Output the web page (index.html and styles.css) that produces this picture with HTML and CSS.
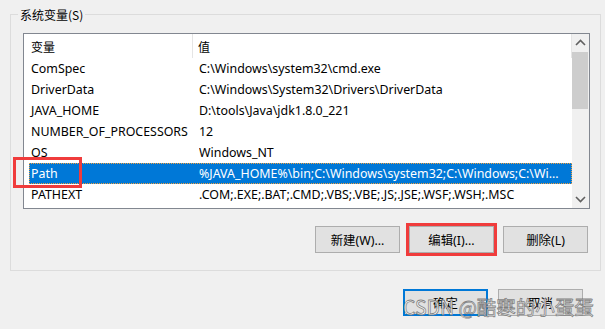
FILE: index.html
```html
<!DOCTYPE html>
<html lang="zh-CN">
<head>
<meta charset="utf-8">
<title>系统变量</title>
<link rel="stylesheet" href="styles.css">
</head>
<body>
<div class="group">
  <span class="legend">系统变量(S)</span>
  <div class="list">
    <div class="list-main">
      <div class="header">
        <div class="hcell hname">变量</div>
        <div class="hcell hvalue">值</div>
      </div>
      <div class="rows">
        <div class="row"><span class="c1">ComSpec</span><span class="c2">C:\Windows\system32\cmd.exe</span></div>
        <div class="row"><span class="c1">DriverData</span><span class="c2">C:\Windows\System32\Drivers\DriverData</span></div>
        <div class="row"><span class="c1">JAVA_HOME</span><span class="c2">D:\tools\Java\jdk1.8.0_221</span></div>
        <div class="row"><span class="c1">NUMBER_OF_PROCESSORS</span><span class="c2">12</span></div>
        <div class="row"><span class="c1">OS</span><span class="c2">Windows_NT</span></div>
        <div class="row selected"><span class="c1">Path</span><span class="c2">%JAVA_HOME%\bin;C:\Windows\system32;C:\Windows;C:\Wi...</span></div>
        <div class="row"><span class="c1">PATHEXT</span><span class="c2">.COM;.EXE;.BAT;.CMD;.VBS;.VBE;.JS;.JSE;.WSF;.WSH;.MSC</span></div>
      </div>
      <div class="mark mark-path"></div>
    </div>
    <div class="scrollbar">
      <div class="arrow">
        <svg width="11" height="7" viewBox="0 0 11 7"><path d="M1 6 L5.5 1.5 L10 6" fill="none" stroke="#606060" stroke-width="1.6"/></svg>
      </div>
      <div class="track"><div class="thumb"></div></div>
      <div class="arrow">
        <svg width="11" height="7" viewBox="0 0 11 7"><path d="M1 1 L5.5 5.5 L10 1" fill="none" stroke="#606060" stroke-width="1.6"/></svg>
      </div>
    </div>
  </div>
  <div class="actions">
    <button class="btn">新建(W)...</button>
    <button class="btn marked">编辑(I)...</button>
    <button class="btn">删除(L)</button>
  </div>
</div>
<div class="footer">
  <button class="btn default">确定</button>
  <button class="btn">取消</button>
</div>
<div class="watermark">CSDN @酷寒的小蛋蛋</div>
</body>
</html>
```
FILE: styles.css
```css
* { box-sizing: border-box; }
html, body {
  margin: 0;
  padding: 0;
  background: #f0f0f0;
  width: 605px;
  height: 329px;
  overflow: hidden;
}
body {
  position: relative;
  padding: 14px 4px 0 10px;
  font-family: "Noto Sans", "Noto Sans CJK SC", sans-serif;
  font-size: 12.4px;
  color: #000;
}
.group {
  position: relative;
  border: 1px solid #dcdcdc;
  height: 257px;
  padding: 18px 11px 0 12px;
}
.legend {
  position: absolute;
  left: 7px;
  top: -9px;
  padding: 0 2px;
  background: #f0f0f0;
  line-height: 17px;
  font-family: "Noto Sans CJK SC", sans-serif;
  font-size: 12px;
}
.list {
  display: flex;
  border: 1px solid #828790;
  background: #fff;
  height: 176px;
  width: 567px;
}
.list-main {
  position: relative;
  flex: 1;
  min-width: 0;
}
.header {
  display: flex;
  height: 24px;
}
.hcell {
  display: flex;
  align-items: center;
  padding-left: 7px;
  font-family: "Noto Sans CJK SC", sans-serif;
  font-size: 12px;
  border-right: 1px solid #e5e5e5;
}
.hname { width: 169px; }
.hvalue { width: 379px; padding-left: 5px; }
.rows {
  padding-left: 5px;
}
.row {
  display: flex;
  align-items: center;
  height: 21px;
  white-space: nowrap;
  border: 1px solid transparent;
}
.row .c1 { width: 169px; padding-left: 1px; flex: none; }
.row .c2 { flex: 1; min-width: 0; overflow: hidden; }
.row.selected {
  background: #0078d7;
  color: #fff;
  border: 1px dotted #f0a040;
}
.mark {
  position: absolute;
  border: 3px solid #f03c3c;
}
.mark-path {
  left: -11px;
  top: 123px;
  width: 69px;
  height: 31px;
}
.scrollbar {
  width: 17px;
  display: flex;
  flex-direction: column;
  background: #f0f0f0;
}
.arrow {
  height: 17px;
  display: flex;
  align-items: center;
  justify-content: center;
}
.track { flex: 1; }
.thumb {
  margin-top: 1px;
  height: 57px;
  width: 16px;
  background: #cdcdcd;
}
.actions {
  display: flex;
  justify-content: flex-end;
  gap: 9px;
  margin-top: 17px;
  padding-right: 1px;
}
.btn {
  position: relative;
  width: 85px;
  height: 27px;
  border: 1px solid #adadad;
  background: #e1e1e1;
  font-family: "Noto Sans", "Noto Sans CJK SC", sans-serif;
  font-size: 12.4px;
  color: #000;
  padding: 0;
}
.btn.marked::after {
  content: "";
  position: absolute;
  left: -4px;
  top: -4px;
  right: -4px;
  bottom: -4px;
  border: 3px solid #f03c3c;
}
.btn.default {
  border: 2px solid #0078d7;
}
.footer {
  display: flex;
  justify-content: flex-end;
  gap: 10px;
  margin-top: 18px;
  padding-right: 18px;
}
.watermark {
  position: absolute;
  left: 403px;
  top: 292px;
  font-family: "Noto Sans CJK SC", sans-serif;
  font-size: 19.5px;
  line-height: 30px;
  color: rgba(255, 255, 255, 0.85);
  -webkit-text-stroke: 0.8px rgba(110, 110, 110, 0.85);
  white-space: nowrap;
}
```
